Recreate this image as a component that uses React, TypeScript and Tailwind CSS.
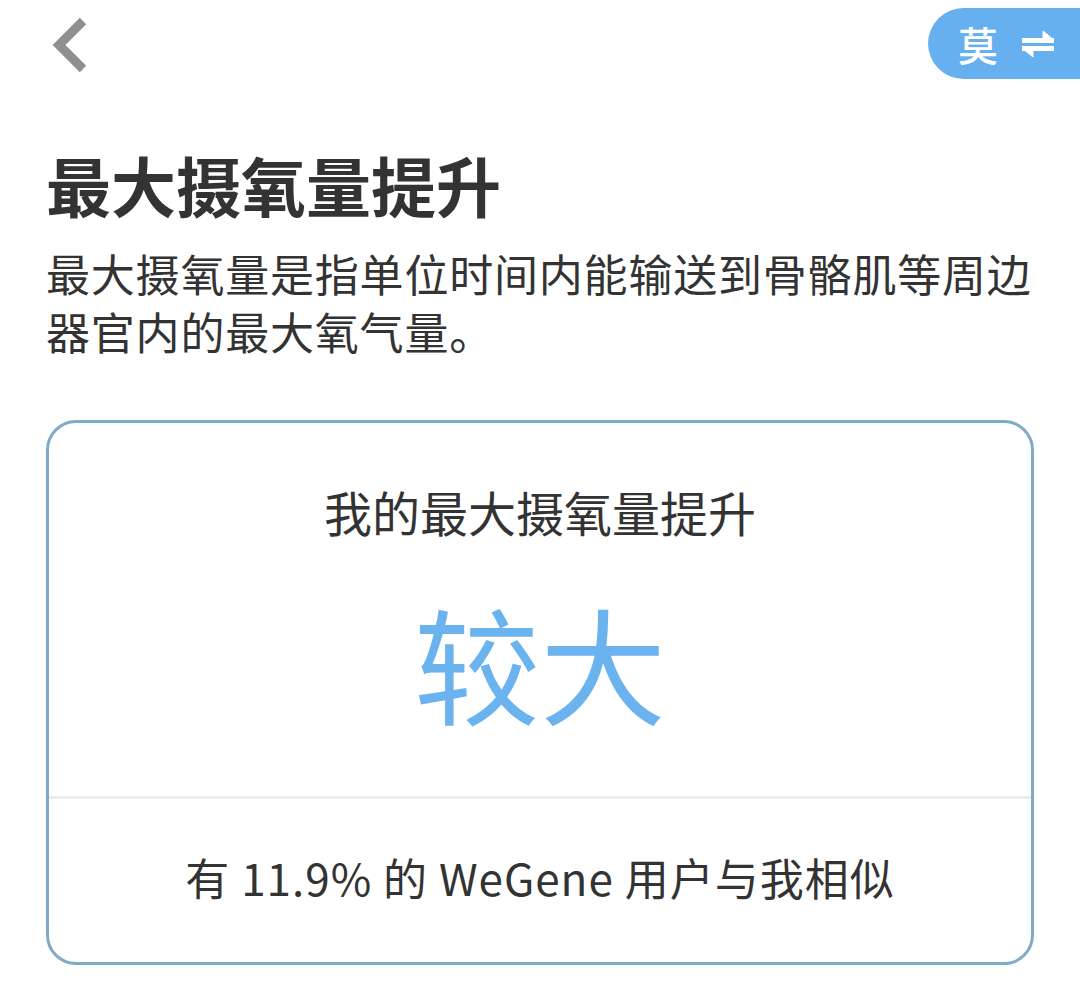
import React from "react";

const font = { fontFamily: '"Noto Sans CJK SC", "Noto Sans", sans-serif' };

export default function App() {
  return (
    <div className="relative w-[1080px] h-[986px] bg-white overflow-hidden" style={font}>
      <div className="flex items-start justify-between h-[100px]">
        <svg className="ml-[50px] mt-[16px]" width="42" height="58" viewBox="0 0 42 58">
          <path d="M33 5 L9 29 L33 53" fill="none" stroke="#8f8f8f" strokeWidth="9" strokeLinecap="butt" strokeLinejoin="miter" />
        </svg>
        <div className="mt-[8px] mr-[-40px] h-[71px] w-[192px] rounded-l-full bg-[#66b0ef] flex items-center pl-[30px] gap-[22px]">
          <span className="text-white text-[40px] leading-none font-medium">莫</span>
          <svg width="36" height="30" viewBox="0 0 36 30">
            <path d="M2 11 H34 L23 2 V11" fill="#fff" stroke="#fff" strokeWidth="1" />
            <rect x="2" y="9" width="32" height="5" fill="#fff" />
            <path d="M34 19 H2 L13 28 V19" fill="#fff" stroke="#fff" strokeWidth="1" />
            <rect x="2" y="17" width="32" height="5" fill="#fff" />
          </svg>
        </div>
      </div>
      <div className="pl-[46px] pr-[40px]">
        <h1 className="mt-[46px] text-[65px] leading-[76px] font-bold text-[#333333]">最大摄氧量提升</h1>
        <p className="mt-[22px] text-[44px] leading-[58px] text-[#333333] tracking-[0.8px]">
          最大摄氧量是指单位时间内能输送到骨骼肌等周边器官内的最大氧气量。
        </p>
        <div className="mt-[60px] w-[988px] h-[545px] border-[3px] border-[#80abc8] rounded-[30px] flex flex-col">
          <div className="h-[376px] flex flex-col items-center border-b-[3px] border-[#ececec]">
            <div className="mt-[58px] text-[48px] leading-[60px] text-[#333333]">我的最大摄氧量提升</div>
            <div className="mt-[52px] text-[126px] leading-[136px] text-[#6ab3ef]">较大</div>
          </div>
          <div className="flex-1 flex items-center justify-center pb-[8px]">
            <span className="text-[44px] text-[#333333] tracking-[1px]">有 11.9% 的 WeGene 用户与我相似</span>
          </div>
        </div>
      </div>
    </div>
  );
}
